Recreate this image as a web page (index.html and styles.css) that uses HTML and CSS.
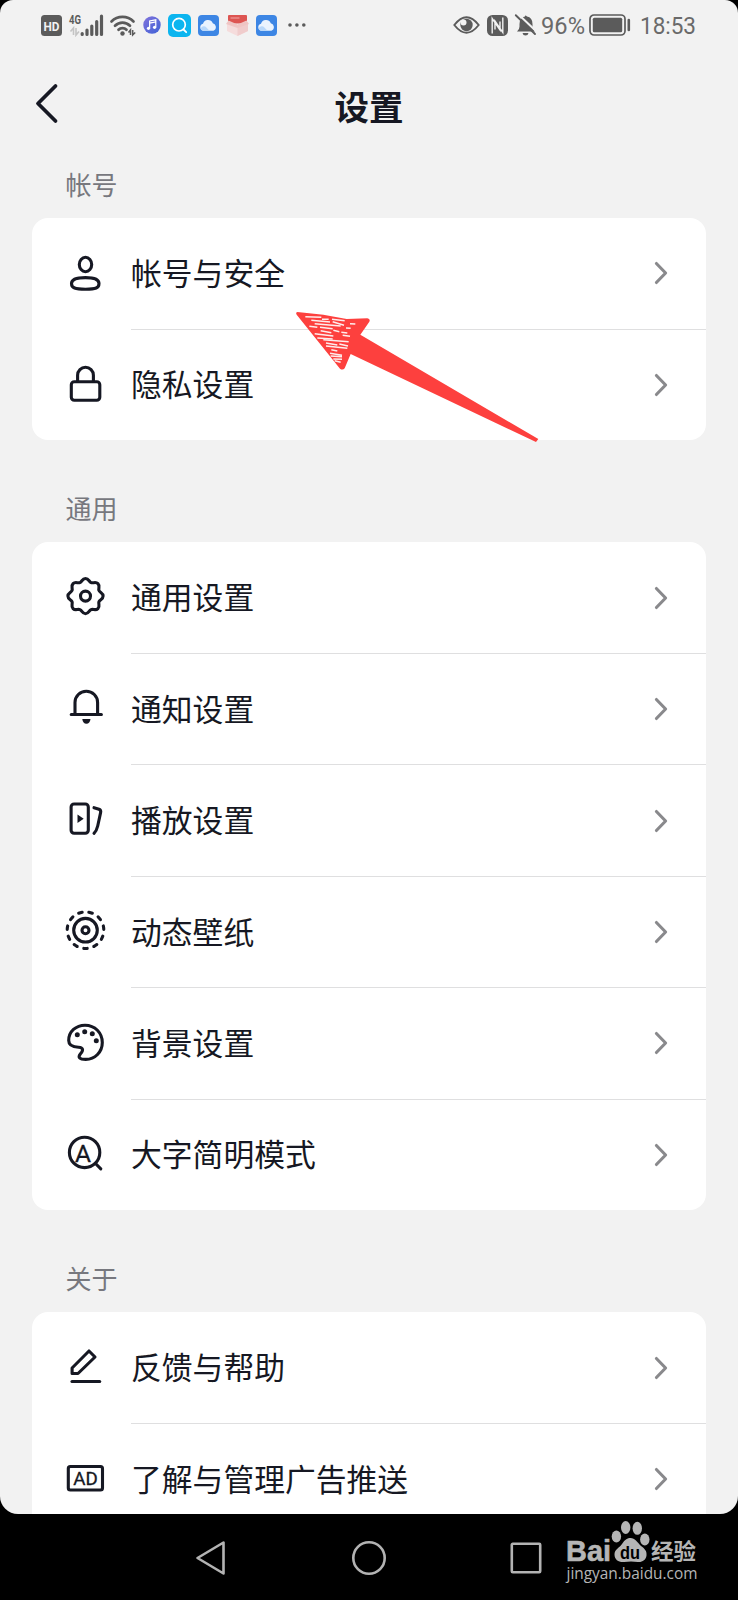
FILE: index.html
```html
<!DOCTYPE html>
<html lang="zh-CN">
<head>
    <meta charset="UTF-8">
    <meta name="viewport" content="width=device-width, initial-scale=1.0">
    <title>设置</title>
    <link rel="stylesheet" href="styles.css">
</head>
<body>

    <!-- shared shapes -->
    <svg class="defs" width="0" height="0">
        <symbol id="chevron" viewBox="0 0 14 24">
            <path d="M2.4 2.5L11.6 12L2.4 21.5" fill="none" stroke="#89898c" stroke-width="3.1" stroke-linecap="round" stroke-linejoin="round"/>
        </symbol>
        <symbol id="cloud" viewBox="0 0 21 21">
            <rect width="21" height="21" rx="4" fill="#3d86e4"/>
            <path d="M5 15.8a3.6 3.6 0 0 1 0-7a5.200 5.200 0 0 1 9.800-.6a4 4 0 0 1 .6 7.600z" fill="#eaf3fe"/>
            <path d="M3.200 12.500q3-2.500 5.200 0t3.400 3.300H5q-2.500-.6-1.800-3.300z" fill="#b9d8fa"/>
        </symbol>
    </svg>

    <div class="screen">
        <div class="status-bar">
            <div class="status-left">
                <svg width="21" height="21" viewBox="0 0 21 21">
                    <rect width="21" height="21" rx="3.5" fill="#5b5b5b"/>
                    <text x="2.500" y="15.800" class="hd" textLength="16" lengthAdjust="spacingAndGlyphs">HD</text>
                </svg>
                <svg width="34" height="22" viewBox="0 0 34 22">
                    <text x="0" y="9.500" class="net" textLength="12" lengthAdjust="spacingAndGlyphs">4G</text>
                    <path d="M4.500 21v-7L1.500 17.500M7 14v7l3-3.500" fill="none" stroke="#c4c4c4" stroke-width="1.600"/>
                    <path d="M13.200 20.500v-1M18 20.500v-4.500M22.800 20.500v-8.500M27.700 20.500v-13M32.500 20.500v-18.500" stroke="#5b5b5b" stroke-width="3.200" stroke-linecap="round"/>
                </svg>
                <svg width="26" height="22" viewBox="0 0 26 22">
                    <path d="M1.500 7.500a15.500 15.500 0 0 1 22 0M5 11.800a10.500 10.500 0 0 1 15 0M8.500 15.800a5.500 5.500 0 0 1 8 0" fill="none" stroke="#5b5b5b" stroke-width="2.700" stroke-linecap="round"/>
                    <circle cx="12.500" cy="19.500" r="2.200" fill="#5b5b5b"/>
                    <path d="M20.500 21v-5L18.500 18.500M22.700 16v5l2.500-2.500" fill="none" stroke="#5b5b5b" stroke-width="1.500"/>
                </svg>
                <svg width="18" height="18" viewBox="0 0 19 19">
                    <defs>
                        <linearGradient id="music" x1="0" y1="0" x2="1" y2="1">
                            <stop offset="0" stop-color="#8273dc"/>
                            <stop offset="1" stop-color="#3e62d6"/>
                        </linearGradient>
                    </defs>
                    <circle cx="9.500" cy="9.500" r="9.200" fill="url(#music)"/>
                    <path d="M7 13V5.200L13.500 4v7.800M7 7.500l6.500-1.200" fill="none" stroke="#fff" stroke-width="1.300"/>
                    <circle cx="5.800" cy="13" r="1.700" fill="#fff"/>
                    <circle cx="12.200" cy="12" r="1.700" fill="#fff"/>
                </svg>
                <svg width="23" height="23" viewBox="0 0 23 23">
                    <rect width="23" height="23" rx="5" fill="#0cb5ef"/>
                    <circle cx="11" cy="10.700" r="6.300" fill="none" stroke="#fff" stroke-width="1.700"/>
                    <path d="M15.500 15.500l2.700 2.700" stroke="#fff" stroke-width="1.800" stroke-linecap="round"/>
                </svg>
                <svg width="21" height="21"><use href="#cloud"/></svg>
                <!-- red box with its lid open -->
                <svg width="23" height="21" viewBox="0 0 23 21">
                    <path d="M2 1q0-1 1-1h17q1 0 1 1v7.500H2z" fill="#dd5552"/>
                    <path d="M4.500 3h9" stroke="#f3a9a7" stroke-width="1.200"/>
                    <path d="M1 9L11.500 11L22 9V16L11.500 21L1 16z" fill="#f5dcdc"/>
                    <path d="M11.500 11L22 9V16L11.500 21z" fill="#f0cccc"/>
                    <path d="M0 9l2.500-3.500L11.500 9.500L20.500 5.500L23 9l-11.500 4z" fill="#efc5c4"/>
                </svg>
                <svg width="21" height="21"><use href="#cloud"/></svg>
                <svg class="more" width="18" height="6" viewBox="0 0 18 6">
                    <circle cx="2" cy="3" r="1.800"/><circle cx="8.900" cy="3" r="1.800"/><circle cx="15.800" cy="3" r="1.800"/>
                </svg>
            </div>
            <div class="status-right">
                <svg width="27" height="18" viewBox="0 0 27 18">
                    <path d="M1.300 9Q13.500-6.500 25.700 9Q13.500 24.500 1.300 9z" fill="none" stroke="#5b5b5b" stroke-width="1.900"/>
                    <circle cx="13.500" cy="9" r="6.200" fill="#5b5b5b"/>
                    <circle cx="10.500" cy="6.500" r="3" fill="#f2f2f2"/>
                </svg>
                <svg class="nfc" width="21" height="21" viewBox="0 0 21 21">
                    <rect width="21" height="21" rx="5.500" fill="#5b5b5b"/>
                    <path d="M5.200 18.500V3.500L13 15V6.500M15.800 2.500V17.500L8 6V14.500" fill="none" stroke="#f2f2f2" stroke-width="1.400"/>
                </svg>
                <svg class="mute" width="21" height="22" viewBox="0 0 21 22">
                    <path d="M2 17.500q2.500-2 2.500-5V10q0-6.500 5.500-7.500q0-2 2 0q5.500 1 5.500 7.500v2.500q0 3 2.500 5z" fill="#5b5b5b"/>
                    <path d="M7.500 19h6q-.5 2.500-3 2.500t-3-2.500z" fill="#5b5b5b"/>
                    <path d="M2.500-.5L22 18" stroke="#f2f2f2" stroke-width="2"/>
                    <path d="M.8 1.200L20 20" stroke="#5b5b5b" stroke-width="1.900" stroke-linecap="round"/>
                </svg>
                <svg class="percent" width="45" height="22">
                    <text x="0" y="20" class="status-text" textLength="44" lengthAdjust="spacingAndGlyphs">96%</text>
                </svg>
                <svg class="battery" width="42" height="22" viewBox="0 0 42 22">
                    <rect x="1" y="1" width="35" height="20" rx="4" fill="none" stroke="#5b5b5b" stroke-width="1.700"/>
                    <rect x="3.800" y="3.800" width="29.400" height="14.400" rx="1.500" fill="#5b5b5b"/>
                    <path d="M39.800 6v10" stroke="#5b5b5b" stroke-width="2.600" stroke-linecap="round"/>
                </svg>
                <svg class="time" width="56" height="22">
                    <text x="0" y="20" class="status-text" textLength="56" lengthAdjust="spacingAndGlyphs">18:53</text>
                </svg>
            </div>
        </div>

        <div class="header">
            <svg class="back" width="24" height="40" viewBox="0 0 24 40">
                <path d="M20.500 3L3 20.500L20.500 38" fill="none" stroke="#161823" stroke-width="3.800" stroke-linecap="round" stroke-linejoin="round"/>
            </svg>
            <h1>设置</h1>
        </div>

        <h2>帐号</h2>
        <div class="card">
            <div class="row">
                <svg class="icon" viewBox="0 0 40 40">
                    <ellipse cx="20.500" cy="10.500" rx="6.200" ry="7.200"/>
                    <path d="M6.500 29.500C6.500 25 12 23.600 20.500 23.600S34 25 34 29.500C34 34 31 35.200 20.500 35.200S6.500 34 6.500 29.500z"/>
                </svg>
                <div class="row-body"><span>帐号与安全</span><svg class="chevron"><use href="#chevron"/></svg></div>
            </div>
            <div class="row">
                <svg class="icon" viewBox="0 0 40 40">
                    <rect x="6.300" y="16.800" width="28.500" height="18.400" rx="3"/>
                    <path d="M12.600 16.500V10.200a7.900 7.900 0 0 1 15.800 0v6.300"/>
                </svg>
                <div class="row-body"><span>隐私设置</span><svg class="chevron"><use href="#chevron"/></svg></div>
            </div>
        </div>

        <h2>通用</h2>
        <div class="card">
            <div class="row">
                <svg class="icon" viewBox="0 0 40 40">
                    <g transform="translate(20.500 18.100)">
                        <path d="M0-17.600C3.400-17.600 3.370-14.410 5.590-13.490C7.810-12.570 10.050-14.850 12.450-12.450C14.850-10.050 12.570-7.810 13.490-5.590C14.410-3.370 17.600-3.400 17.600 0C17.600 3.400 14.410 3.370 13.490 5.590C12.570 7.810 14.850 10.050 12.450 12.450C10.050 14.850 7.810 12.570 5.590 13.490C3.370 14.410 3.400 17.600 0 17.600C-3.400 17.600-3.370 14.410-5.590 13.490C-7.810 12.570-10.050 14.850-12.450 12.450C-14.850 10.050-12.570 7.810-13.490 5.590C-14.410 3.370-17.600 3.400-17.600 0C-17.600-3.400-14.410-3.370-13.490-5.590C-12.570-7.810-14.850-10.050-12.450-12.450C-10.050-14.850-7.810-12.570-5.590-13.490C-3.370-14.410-3.400-17.600 0-17.600z"/>
                        <circle r="5"/>
                    </g>
                </svg>
                <div class="row-body"><span>通用设置</span><svg class="chevron"><use href="#chevron"/></svg></div>
            </div>
            <div class="row">
                <svg class="icon" viewBox="0 0 40 40">
                    <path d="M10 25.300V13.500a11.300 11.300 0 0 1 22.600 0v11.800M6.200 25.500h30.200"/>
                    <path class="fill" d="M17.300 30h8.200q-.6 4.800-4.100 4.800t-4.100-4.800z"/>
                </svg>
                <div class="row-body"><span>通知设置</span><svg class="chevron"><use href="#chevron"/></svg></div>
            </div>
            <div class="row">
                <svg class="icon" viewBox="0 0 40 40">
                    <rect x="6.100" y="3" width="17.200" height="29.200" rx="3"/>
                    <path class="fill" d="M12.500 13.500v8.500l6.200-4.200z"/>
                    <path d="M29 6.700L34 8.300Q36.200 9.200 35.600 11.700L32.700 25Q31.500 30 29 32.300"/>
                </svg>
                <div class="row-body"><span>播放设置</span><svg class="chevron"><use href="#chevron"/></svg></div>
            </div>
            <div class="row">
                <svg class="icon" viewBox="0 0 40 40">
                    <circle cx="20.500" cy="18.200" r="18.300" pathLength="110" stroke-dasharray="3.400 6.600" stroke-dashoffset="1.700" transform="rotate(90 20.500 18.200)"/>
                    <circle cx="20.500" cy="18.200" r="11.800"/>
                    <circle cx="20.500" cy="18.200" r="3.500"/>
                </svg>
                <div class="row-body"><span>动态壁纸</span><svg class="chevron"><use href="#chevron"/></svg></div>
            </div>
            <div class="row">
                <svg class="icon" viewBox="0 0 40 40">
                    <path d="M3.700 17.500C3.700 8.500 11 2.200 20 2.200C30 2.200 37.300 10 37.300 19.500C37.300 29 30 36.400 20.800 36.400C14.500 36.400 12.500 34.500 15.500 30.800C18.500 27.500 18.500 24.500 13.500 24.200C8 24 3.700 22.500 3.700 17.500z"/>
                    <g class="dots">
                        <circle cx="12.300" cy="11.800" r="2.500"/><circle cx="19.700" cy="8.800" r="2.500"/>
                        <circle cx="27.300" cy="10.800" r="2.500"/><circle cx="31.300" cy="17.800" r="2.500"/>
                    </g>
                </svg>
                <div class="row-body"><span>背景设置</span><svg class="chevron"><use href="#chevron"/></svg></div>
            </div>
            <div class="row">
                <svg class="icon" viewBox="0 0 40 40">
                    <circle cx="19.600" cy="17.400" r="15.200"/>
                    <path d="M30.500 28.500L35.800 33.800"/>
                    <text x="9.900" y="26.500" font-size="24" textLength="16" lengthAdjust="spacingAndGlyphs">A</text>
                </svg>
                <div class="row-body"><span>大字简明模式</span><svg class="chevron"><use href="#chevron"/></svg></div>
            </div>
        </div>

        <h2>关于</h2>
        <div class="card">
            <div class="row">
                <svg class="icon" viewBox="0 0 40 40">
                    <path d="M7.100 25.500V20L24 3L30 9L13 25.500z"/>
                    <path d="M7 33.500h27.700"/>
                </svg>
                <div class="row-body"><span>反馈与帮助</span><svg class="chevron"><use href="#chevron"/></svg></div>
            </div>
            <div class="row">
                <svg class="icon" viewBox="0 0 40 40">
                    <rect x="3.300" y="7.500" width="34.200" height="23.500" rx="2"/>
                    <text x="8.300" y="25.500" font-size="18" textLength="24.500" lengthAdjust="spacingAndGlyphs">AD</text>
                </svg>
                <div class="row-body"><span>了解与管理广告推送</span><svg class="chevron"><use href="#chevron"/></svg></div>
            </div>
        </div>

        <!-- red marker arrow -->
        <svg class="arrow" viewBox="0 0 840 510">
            <path d="M52 66L130 74L200 87L262 85Q272 87 268 95L241 134L775 447L768 456L212 192L194 235Q188 242 180 236L50 74Q46 67 52 66z" fill="#fd403e"/>
            <g stroke="#fff" stroke-width="4.500" fill="none" opacity=".9">
                <path d="M76 80L124 82M126 88L146 88M156 88L194 92M94 91L150 96M158 95L192 106M104 101L182 108M88 109L112 112M120 112L158 116"/>
                <path d="M210 101L226 102M198 114L212 115M160 121L178 125M184 127L202 129M122 122L154 128M104 131L160 138M188 136L210 139M112 144L158 147"/>
                <path d="M130 149L206 155M138 159L172 165M178 162L204 168M138 168L202 175M154 179L172 183M150 190L186 196M152 198L186 200M160 207L186 208M164 212L182 217"/>
            </g>
        </svg>
    </div>

    <div class="nav-bar">
        <svg width="32" height="36" viewBox="0 0 32 36"><path d="M28.500 2.500V33.500L2.500 18z"/></svg>
        <svg width="36" height="36" viewBox="0 0 36 36"><circle cx="18" cy="18" r="15.700"/></svg>
        <svg width="32" height="36" viewBox="0 0 32 36"><rect x="1.800" y="3.800" width="28.400" height="28.400" rx="1"/></svg>
    </div>

    <svg class="watermark" width="150" height="70" viewBox="0 0 150 70">
        <text x="6" y="41" class="logo" textLength="45" lengthAdjust="spacingAndGlyphs">Bai</text>
        <ellipse cx="56.400" cy="16.500" rx="4.700" ry="6"/>
        <ellipse cx="65.700" cy="7.500" rx="4.700" ry="6.500"/>
        <ellipse cx="77.300" cy="8.300" rx="4.700" ry="6.500"/>
        <ellipse cx="84.800" cy="19.500" rx="4.700" ry="6"/>
        <path d="M70.500 18C75 18 77 22 81 26C85 29 87 31 86.500 35.500C86 40 82 42.500 78 42C73 41.200 69 41.200 64 42C59 42.500 54.500 40 54.500 34.500C54.500 29.500 59 28 62 24C64.500 20.500 66.500 18 70.500 18z"/>
        <text x="60" y="38.500" class="du" textLength="20" lengthAdjust="spacingAndGlyphs">du</text>
        <text x="91" y="38.500" class="cn" textLength="45" lengthAdjust="spacingAndGlyphs">经验</text>
        <text x="6.500" y="59" class="url" textLength="131" lengthAdjust="spacingAndGlyphs">jingyan.baidu.com</text>
    </svg>

</body>
</html>
```

FILE: styles.css
```css
* {
    box-sizing: border-box;
}

body {
    margin: 0;
    background-color: #000;
    color: #161823;
    font-family: 'Noto Sans CJK SC', sans-serif;
}

svg {
    display: block;
    flex-shrink: 0;
    overflow: visible;
}

.defs {
    position: absolute;
}

.screen {
    position: relative;
    height: 1514px;
    overflow: hidden;
    background-color: #f2f2f2;
    border-radius: 13px 13px 18px 18px;
}

/* status bar */
.status-bar {
    display: flex;
    justify-content: space-between;
    height: 50px;
    padding: 0 42px 0 41px;
}

.status-left,
.status-right {
    display: flex;
    align-items: center;
}

.status-left {
    gap: 7px;
}

.more {
    margin-left: 4px;
    fill: #5b5b5b;
}

.nfc,
.mute {
    margin-left: 7px;
}

.percent {
    margin-left: 5px;
}

.battery {
    margin-left: 3px;
}

.time {
    margin-left: 9px;
}

.hd {
    font: bold 13px Roboto, sans-serif;
    fill: #f2f2f2;
}

.net {
    font: bold 12.5px Roboto, sans-serif;
    fill: #5b5b5b;
}

.status-text {
    font: 23.5px Roboto, sans-serif;
    fill: #6a6a6a;
}

/* title */
.header {
    position: relative;
    height: 101px;
    padding-top: 30px;
}

.back {
    position: absolute;
    left: 35px;
    top: 33px;
}

h1 {
    margin: 0;
    font-size: 34.5px;
    line-height: 50px;
    font-weight: bold;
    text-align: center;
}

h2 {
    margin: 0;
    padding: 0 65.5px;
    height: 67px;
    font-size: 26px;
    line-height: 66px;
    font-weight: normal;
    color: #77787e;
}

.card + h2 {
    margin-top: 35.3px;
}

/* list */
.card {
    margin: 0 32px;
    background-color: #fff;
    border-radius: 16px;
}

.row {
    display: flex;
    align-items: center;
    height: 111.4px;
    padding-left: 33px;
}

.row:first-child {
    height: 110.7px;
}

.row-body {
    display: flex;
    flex: 1;
    align-items: center;
    justify-content: space-between;
    height: 100%;
    margin-left: 26px;
    padding-right: 38.5px;
    font-size: 30.8px;
    white-space: nowrap;
}

.row-body span {
    padding-bottom: 4px;
}

.row + .row .row-body {
    border-top: 1px solid #dfdfe0;
}

.icon {
    width: 40px;
    height: 40px;
    margin-top: 1px;
    fill: none;
    stroke: #161823;
    stroke-width: 3.1;
    stroke-linecap: round;
    stroke-linejoin: round;
}

.icon text {
    font-family: Roboto, sans-serif;
    fill: #161823;
    stroke: #161823;
    stroke-width: 0.3;
}

.icon .fill,
.icon .dots {
    fill: #161823;
    stroke: none;
}

.chevron {
    width: 14px;
    height: 24px;
}

.arrow {
    position: absolute;
    left: 280px;
    top: 290px;
    width: 280px;
    height: 170px;
}

/* system navigation */
.nav-bar {
    display: flex;
    align-items: center;
    justify-content: space-between;
    height: 87px;
    margin-bottom: -1px;
    padding: 0 196px 0 195px;
}

.nav-bar svg {
    fill: none;
    stroke: #b3b3b3;
    stroke-width: 2.6;
    stroke-linejoin: round;
}

.watermark {
    position: absolute;
    left: 560px;
    top: 1520px;
    fill: #b5b5b5;
}

.logo {
    font: bold 29.5px 'Liberation Sans', sans-serif;
    stroke: #b5b5b5;
    stroke-width: 0.6;
}

.du {
    font: bold 19px 'Liberation Sans', sans-serif;
    fill: #000;
}

.cn {
    font: bold 22px 'Noto Sans CJK SC', sans-serif;
}

.url {
    font: 16.5px 'Open Sans', sans-serif;
}
```
